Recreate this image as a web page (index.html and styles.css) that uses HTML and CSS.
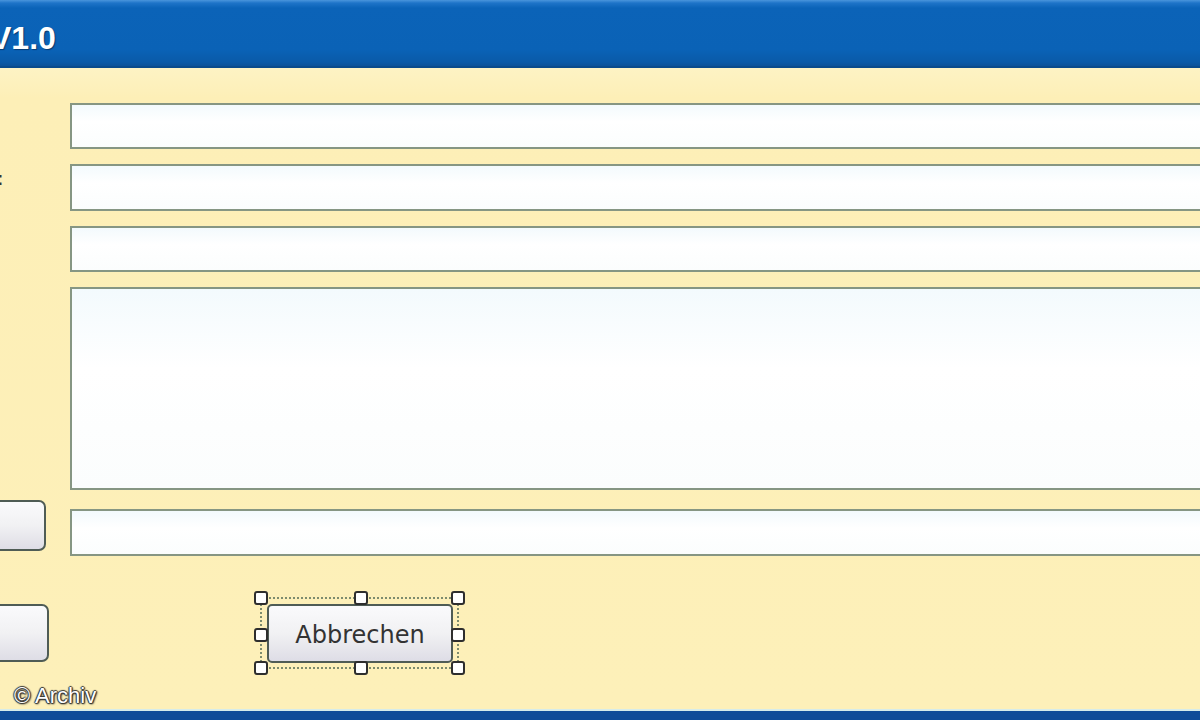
FILE: index.html
```html
<!DOCTYPE html>
<html lang="de">
<head>
<meta charset="utf-8">
<title>V1.0</title>
<link rel="stylesheet" href="styles.css">
</head>
<body>
<div class="window">
  <header class="titlebar"><span class="title">V1.0</span></header>
  <main class="content">
    <div class="row r1">
      <div class="lead"></div>
      <div class="field"></div>
    </div>
    <div class="row r2">
      <div class="lead"><span class="label">:</span></div>
      <div class="field"></div>
    </div>
    <div class="row r3">
      <div class="lead"></div>
      <div class="field"></div>
    </div>
    <div class="row r4">
      <div class="lead"></div>
      <div class="field area"></div>
    </div>
    <div class="row r5">
      <div class="lead"><button class="btn side1"></button></div>
      <div class="field low"></div>
    </div>
    <div class="row r6">
      <div class="lead"><button class="btn side2"></button></div>
      <div class="sel">
        <button class="btn cancel">Abbrechen</button>
        <span class="h tl"></span><span class="h tc"></span><span class="h tr"></span>
        <span class="h ml"></span><span class="h mr"></span>
        <span class="h bl"></span><span class="h bc"></span><span class="h br"></span>
      </div>
    </div>
    <div class="credit">© Archiv</div>
  </main>
  <footer class="statusbar"></footer>
</div>
</body>
</html>
```

FILE: styles.css
```css
html, body {
  margin: 0;
  padding: 0;
  width: 1200px;
  height: 720px;
  overflow: hidden;
  background: #fdf0b9;
  font-family: "DejaVu Sans", "Liberation Sans", sans-serif;
}

.window {
  width: 1200px;
  height: 720px;
  display: flex;
  flex-direction: column;
  overflow: hidden;
}

.titlebar {
  height: 66px;
  flex: none;
  border-bottom: 2px solid #0a4b8c;
  background: linear-gradient(to bottom, #4a95dc 0px, #1e74c8 3px, #0b63b8 8px, #0a62b6 50px, #0a5aa8 62px, #0c5299 66px);
  display: flex;
  align-items: center;
}

.title {
  margin-left: -10px;
  margin-top: 10px;
  font-family: "Liberation Sans", sans-serif;
  font-weight: bold;
  font-size: 32px;
  color: #ffffff;
  text-shadow: 1px 1px 1px #083a70;
}

.content {
  flex: 1;
  background: linear-gradient(to bottom, #fdf3c4 0px, #fdefb7 30px, #fdf0b9 100%);
  padding-top: 35px;
  display: flex;
  flex-direction: column;
  border-bottom: 2px solid #d6ecea;
}

.row {
  display: flex;
  align-items: flex-start;
}

.r2, .r3, .r4 { margin-top: 15px; }
.r5 { margin-top: 10px; }
.r6 { margin-top: 41px; }

.lead {
  width: 70px;
  flex: none;
  position: relative;
}

.field {
  flex: none;
  width: 1160px;
  height: 46px;
  box-sizing: border-box;
  border: 2px solid #869683;
  background: linear-gradient(to bottom, #f3fafd, #ffffff 40%, #fbfdfd);
}

.r2 .field { height: 47px; }
.field.area { height: 203px; }
.field.low { height: 47px; margin-top: 9px; }

.label {
  display: block;
  margin-left: -3px;
  margin-top: 2px;
  font-size: 20px;
  line-height: 24px;
  color: #333333;
}

.btn {
  box-sizing: border-box;
  border: 2px solid #4f5c55;
  border-radius: 7px;
  background: linear-gradient(to bottom, #fafafc 0%, #f1f1f3 50%, #dedde6 100%);
  padding: 0;
  margin: 0;
  font-family: "DejaVu Sans", sans-serif;
  color: #333333;
}

.side1 {
  display: block;
  width: 120px;
  height: 51px;
  margin-left: -74px;
}

.side2 {
  display: block;
  width: 120px;
  height: 58px;
  margin-left: -71px;
  margin-top: 7px;
}

.sel {
  position: relative;
  margin-left: 190px;
  width: 199px;
  height: 72px;
  box-sizing: border-box;
  border: 2px dotted #7d8c6e;
  padding: 5px 4px 4px 5px;
}

.cancel {
  display: block;
  width: 186px;
  height: 59px;
  font-size: 24px;
  border-radius: 5px;
  padding-top: 2px;
}

.h {
  position: absolute;
  width: 10px;
  height: 10px;
  border: 2px solid #2e2e2e;
  border-radius: 3px;
  background: #ffffff;
}

.tl { left: -8px; top: -8px; }
.tc { left: 92px; top: -8px; }
.tr { right: -8px; top: -8px; }
.ml { left: -8px; top: 29px; }
.mr { right: -8px; top: 29px; }
.bl { left: -8px; bottom: -8px; }
.bc { left: 92px; bottom: -8px; }
.br { right: -8px; bottom: -8px; }

.credit {
  margin-top: auto;
  margin-left: 14px;
  font-family: "Liberation Sans", sans-serif;
  font-size: 22px;
  line-height: 26px;
  color: #ffffff;
  text-shadow: 1px 0 1px #333, -1px 0 1px #333, 0 1px 1px #333, 0 -1px 1px #333, 1px 1px 2px #222;
}

.statusbar {
  height: 9px;
  flex: none;
  background: #0f4c98;
}
```
